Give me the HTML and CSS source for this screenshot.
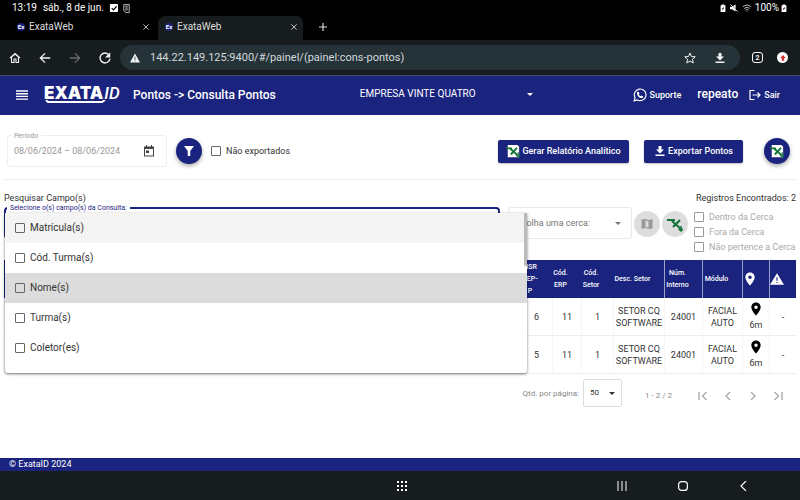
FILE: index.html
```
<!DOCTYPE html>
<html lang="pt-BR">
<head>
<meta charset="utf-8">
<title>ExataWeb</title>
<link rel="stylesheet" href="styles.css">
</head>
<body>
<svg class="defs" aria-hidden="true">
  <symbol id="sheet" viewBox="0 0 16 16">
    <path d="M2 1h11l2 2v12H2z" fill="#fff"/>
    <path d="M0 5h7M5 5.500l8 7M12.500 4.500l-7 7.500" stroke="#16753c" stroke-width="2.200" fill="none"/>
    <path d="M14 9.500v5.500M11.500 12.500l2.500 2.500 2-2" stroke="#16753c" stroke-width="1.400" fill="none"/>
  </symbol>
  <symbol id="pin" viewBox="0 0 24 24"><path fill-rule="evenodd" d="M12 1C7.600 1 4 4.600 4 9c0 6 8 14 8 14s8-8 8-14c0-4.400-3.600-8-8-8zm0 11a3 3 0 1 1 0-6 3 3 0 0 1 0 6z"/></symbol>
  <symbol id="cross" viewBox="0 0 24 24"><path d="M4 4l16 16M20 4L4 20" stroke="currentColor" stroke-width="2.500"/></symbol>
  <symbol id="download" viewBox="0 0 24 24"><path d="M9 2h6v7h5l-8 8-8-8h5zM3 19h18v3H3z"/></symbol>
  <symbol id="battery" viewBox="0 0 8 10"><path fill-rule="evenodd" d="M1 1.500h1.500V.5h3v1H7V10H1zM4 3.500v2H2.500L4 8V6h1.500z"/></symbol>
</svg>

<div class="status">
  <span class="clock">13:19</span>
  <span class="date">sáb., 8 de jun.</span>
  <svg class="i9" viewBox="0 0 10 10"><rect x="1" y="0" width="9" height="9" rx="1"/><path d="M3 4.500l2 2 3.500-4" stroke="#000" stroke-width="1.300" fill="none"/></svg>
  <svg class="i9 note" viewBox="0 0 10 10"><path d="M2 .5h6v9H4.500L2 7.500zM3.500 2.500h3M3.500 4.500h3M3.500 6.500h3" fill="none" stroke="#ccc"/></svg>
  <span class="grow"></span>
  <svg class="i8" viewBox="0 0 8 10"><use href="#battery"/></svg>
  <svg class="i8 mute" viewBox="0 0 10 10"><path d="M0 3.500h2.500L7 .5v9l-4.500-3H0z"/><path d="M1 .5l8.500 9" stroke="#000"/><path d="M.5 .5l9 9" stroke="#fff"/></svg>
  <svg class="i10" viewBox="0 0 12 10"><path d="M1 3.500q5-4 10 0M2.700 5.500q3.300-2.600 6.600 0M4.300 7.400q1.700-1.300 3.400 0M5.500 9h1" fill="none" stroke="#ddd"/></svg>
  <span class="percent">100%</span>
  <svg class="i8" viewBox="0 0 8 10"><use href="#battery"/></svg>
</div>

<nav class="tabs" aria-label="Abas">
  <div class="tab"><span class="fav">Ex</span><span class="tab-name">ExataWeb</span><button class="bare" aria-label="Fechar aba"><svg class="i8"><use href="#cross"/></svg></button></div>
  <div class="tab current"><span class="fav">Ex</span><span class="tab-name">ExataWeb</span><button class="bare" aria-label="Fechar aba"><svg class="i8"><use href="#cross"/></svg></button></div>
  <button class="bare new-tab" aria-label="Nova aba"><svg class="i8" viewBox="0 0 10 10"><path d="M5 0v10M0 5h10" stroke="currentColor" stroke-width="1.500"/></svg></button>
</nav>

<div class="toolbar">
  <button class="bare" aria-label="Início"><svg class="i12" viewBox="0 0 24 24"><path d="M5 21V10l7-6 7 6v11h-5v-7h-4v7zM2 12l10-9 10 9" fill="none" stroke="currentColor" stroke-width="2.200"/></svg></button>
  <button class="bare" aria-label="Voltar"><svg class="i14" viewBox="0 0 24 24"><path d="M21 12H4M12 4l-8 8 8 8" fill="none" stroke="currentColor" stroke-width="2.200"/></svg></button>
  <button class="bare dim" aria-label="Avançar"><svg class="i14" viewBox="0 0 24 24"><path d="M3 12h17M12 4l8 8-8 8" fill="none" stroke="currentColor" stroke-width="2.200"/></svg></button>
  <button class="bare" aria-label="Recarregar"><svg class="i14" viewBox="0 0 24 24"><path d="M19 7a8.500 8.500 0 1 0 1.500 6" fill="none" stroke="currentColor" stroke-width="2.400"/><path d="M21 2v9h-9z"/></svg></button>
  <div class="address">
    <svg class="i10" viewBox="0 0 24 22"><path fill-rule="evenodd" d="M12 0l12 22H0zM11 8h2v7h-2zM11 17h2v2h-2z"/></svg>
    <input class="url" aria-label="Endereço" value="144.22.149.125:9400/#/painel/(painel:cons-pontos)">
    <button class="bare" aria-label="Favoritar"><svg class="i12" viewBox="0 0 24 24"><path d="M12 2l3 7 7.500.6-5.700 5 1.700 7.400L12 18l-6.500 4 1.700-7.400-5.700-5L9 9z" fill="none" stroke="currentColor" stroke-width="2"/></svg></button>
    <button class="bare" aria-label="Baixar"><svg class="i12"><use href="#download"/></svg></button>
  </div>
  <button class="count" aria-label="Abas abertas">2</button>
  <button class="update" aria-label="Atualizar"><svg viewBox="0 0 10 10"><path d="M5 0l4.500 5H7v4.500H3V5H.5z"/></svg></button>
</div>

<header class="header">
  <button class="bare" aria-label="Menu"><svg class="i12" viewBox="0 0 12 12"><path d="M0 2h12M0 4.700h12M0 7.400h12M0 10.100h12" stroke="currentColor" stroke-width="1.400"/></svg></button>
  <div class="logo"><div class="logo-text"><span class="logo-name">EXATA</span><span class="logo-id">ID</span></div>
    <svg class="logo-line" viewBox="0 0 62 4"><path d="M2 0l2 2h54l3-2" fill="none" stroke="#fff" stroke-width="2"/></svg></div>
  <h1>Pontos -&gt; Consulta Pontos</h1>
  <div class="pick company"><select aria-label="Empresa"><option>EMPRESA VINTE QUATRO</option></select></div>
  <a class="link support" href="#"><svg class="i14" viewBox="0 0 24 24"><path d="M2 22l1.500-5.500a10 10 0 1 1 4 4z" fill="none" stroke="currentColor" stroke-width="2"/><path d="M8 6.500l2 .3 1 3-1.200 1.200q1 2.200 3.400 3.300l1.400-1.300 2.900 1.400q0 3-2.800 3.100Q8 16.500 6.700 9.300 6.800 7.500 8 6.500z"/></svg>Suporte</a>
  <span class="user">repeato</span>
  <a class="link" href="#"><svg class="i12" viewBox="0 0 24 22"><path d="M11 2H2v18h9M7 11h15M17 6l5 5-5 5" fill="none" stroke="currentColor" stroke-width="2.400"/></svg>Sair</a>
</header>

<main>
  <section class="filters">
    <div class="period">
      <label for="period">Período</label>
      <input id="period" value="08/06/2024 – 08/06/2024" disabled>
      <button class="bare" aria-label="Calendário"><svg class="i12" viewBox="0 0 24 24"><path fill-rule="evenodd" d="M2 3h4V0h2v3h8V0h2v3h4v20H2zM4 8v13h16V8zM6 11h6v5H6z"/></svg></button>
    </div>
    <button class="round" aria-label="Filtrar"><svg class="i12" viewBox="0 0 24 24"><path d="M2 2h20l-7.500 10v10h-5V12z"/></svg></button>
    <label class="check"><input type="checkbox">Não exportados</label>
    <span class="grow"></span>
    <button class="solid"><svg class="i14"><use href="#sheet"/></svg>Gerar Relatório Analítico</button>
    <button class="solid export"><svg class="i12"><use href="#download"/></svg>Exportar Pontos</button>
    <button class="round" aria-label="Exportar planilha"><svg class="i14"><use href="#sheet"/></svg></button>
  </section>

  <div class="captions"><span>Pesquisar Campo(s)</span><span>Registros Encontrados: 2</span></div>

  <section class="search">
    <div class="field">
      <span class="field-name" id="fields">Selecione o(s) campo(s) da Consulta:</span>
      <div class="menu" role="group" aria-labelledby="fields">
        <label class="hint"><input type="checkbox">Matrícula(s)</label>
        <label><input type="checkbox">Cód. Turma(s)</label>
        <label class="hover"><input type="checkbox">Nome(s)</label>
        <label><input type="checkbox">Turma(s)</label>
        <label><input type="checkbox">Coletor(es)</label>
        <span class="thumb"></span>
      </div>
    </div>
    <div class="pick fence"><select aria-label="Cerca"><option>Escolha uma cerca:</option></select></div>
    <div class="tools">
      <button class="round off" aria-label="Mapa"><svg class="i12" viewBox="0 0 24 24"><path fill-rule="evenodd" d="M1 3l7-1 8 2 7-2v19l-7 1-8-2-7 2zM9 5v13l6 1.500v-13z"/></svg></button>
      <button class="round off" aria-label="Exportar cercas"><svg class="i16" viewBox="0 0 16 16"><path d="M0 4h8M5 5l9 8M13 4L6 11" stroke="#16753c" stroke-width="2.200" fill="none"/><path d="M14 10v5M11.500 13l2.500 2 2-2" stroke="#16753c" stroke-width="1.500" fill="none"/></svg></button>
    </div>
    <div class="fences">
      <label class="check"><input type="checkbox" disabled>Dentro da Cerca</label>
      <label class="check"><input type="checkbox" disabled>Fora da Cerca</label>
      <label class="check"><input type="checkbox" disabled>Não pertence a Cerca</label>
    </div>
  </section>

  <table>
    <colgroup><col><col class="c32"><col class="c29"><col class="c32"><col class="c51"><col class="c38"><col class="c40"><col class="c27"><col class="c27"></colgroup>
    <thead>
      <tr><th></th><th>NSR<br>REP-<br>P</th><th>Cód. ERP</th><th>Cód. Setor</th><th>Desc. Setor</th><th class="rule">Núm. Interno</th><th class="rule">Módulo</th><th class="rule"><svg class="i14"><use href="#pin"/></svg></th><th class="rule"><svg class="i14" viewBox="0 0 24 24"><path fill-rule="evenodd" d="M12 2l12 20H0zM11 9v6h2V9zM11 17v2h2v-2z"/></svg></th></tr>
    </thead>
    <tbody>
      <tr><td></td><td>6</td><td>11</td><td>1</td><td>SETOR CQ SOFTWARE</td><td>24001</td><td>FACIAL AUTO</td><td class="place"><svg class="i14"><use href="#pin"/></svg>6m</td><td>-</td></tr>
      <tr><td></td><td>5</td><td>11</td><td>1</td><td>SETOR CQ SOFTWARE</td><td>24001</td><td>FACIAL AUTO</td><td class="place"><svg class="i14"><use href="#pin"/></svg>6m</td><td>-</td></tr>
    </tbody>
  </table>

  <div class="pager">
    <label for="size">Qtd. por página:</label>
    <div class="pick size"><select id="size"><option>50</option></select></div>
    <span class="range">1 - 2 / 2</span>
    <button class="bare" aria-label="Primeira página"><svg class="i10" viewBox="0 0 10 10"><path d="M1 1v8M8.500 1l-4 4 4 4"/></svg></button>
    <button class="bare" aria-label="Página anterior"><svg class="i10" viewBox="0 0 10 10"><path d="M7 1L3 5l4 4"/></svg></button>
    <button class="bare" aria-label="Próxima página"><svg class="i10" viewBox="0 0 10 10"><path d="M3 1l4 4-4 4"/></svg></button>
    <button class="bare" aria-label="Última página"><svg class="i10" viewBox="0 0 10 10"><path d="M9 1v8M1.500 1l4 4-4 4"/></svg></button>
  </div>
</main>

<footer>© ExataID 2024</footer>

<nav class="system" aria-label="Sistema">
  <button class="bare apps" aria-label="Aplicativos"><svg class="i10" viewBox="0 0 10 10"><path d="M0 1h10M0 5h10M0 9h10" stroke="currentColor" stroke-width="2" stroke-dasharray="2 2"/></svg></button>
  <span class="keys">
    <button class="bare" aria-label="Recentes"><svg class="i10" viewBox="0 0 10 10"><path d="M1 0v10M5 0v10M9 0v10" stroke="currentColor"/></svg></button>
    <button class="bare" aria-label="Tela inicial"><svg class="i10" viewBox="0 0 10 10"><rect x=".6" y=".6" width="8.800" height="8.800" rx="3" fill="none" stroke="currentColor" stroke-width="1.200"/></svg></button>
    <button class="bare" aria-label="Voltar"><svg class="i10" viewBox="0 0 10 10"><path d="M7 0L2 5l5 5" fill="none" stroke="currentColor" stroke-width="1.200"/></svg></button>
  </span>
</nav>
</body>
</html>
```
FILE: styles.css
```
* { box-sizing: border-box; }
body {
  margin: 0;
  min-height: 100vh;
  display: flex;
  flex-direction: column;
  background: #fff;
  color: #333;
  font: 9px/12px Roboto, sans-serif;
}
button, input, select { font: inherit; color: inherit; }
svg { display: block; flex: none; fill: currentColor; }
.defs { position: absolute; width: 0; height: 0; }
.i8 { width: 8px; height: 8px; }
.i9 { width: 9px; height: 9px; }
.i10 { width: 10px; height: 10px; }
.i12 { width: 12px; height: 12px; }
.i14 { width: 14px; height: 14px; }
.i16 { width: 16px; height: 16px; }
.grow { flex: 1; }
.bare {
  display: grid;
  place-items: center;
  flex: none;
  padding: 0;
  border: 0;
  background: none;
}

.status {
  display: flex;
  align-items: center;
  height: 16px;
  padding: 0 12px;
  background: #000;
  color: #fff;
  font-size: 10px;
}
.date { margin: 0 5px 0 6px; }
.note { margin-left: 4px; }
.mute { margin: 0 4px 0 3px; }
.percent { margin: 0 1px 0 3px; }

.tabs { display: flex; height: 24px; background: #000; color: #ddd; font-size: 10px; }
.tab { display: flex; align-items: center; width: 148px; margin-left: 10px; padding: 0 8px 2px 7px; }
.tab.current { margin: 0; width: 145px; padding: 0 5px 2px 7px; border-radius: 7px 7px 0 0; background: #171c1f; }
.tab-name { flex: 1; margin-left: 4px; }
.fav {
  width: 8px;
  height: 8px;
  border-radius: 50%;
  background: #1a237e;
  color: #fff;
  font-size: 6px;
  font-weight: 700;
  line-height: 8px;
  text-align: center;
}
.new-tab { margin: 0 16px 2px; }

.toolbar {
  display: flex;
  align-items: center;
  height: 36px;
  padding: 0 12px 0 8px;
  border-bottom: 1px solid #454b60;
  background: #171c1f;
  color: #f0f3f4;
}
.toolbar > .bare { width: 14px; margin-right: 16px; }
.toolbar > .dim { color: #666b6d; }
.toolbar > .bare:nth-child(4) { margin-right: 8px; }
.address {
  display: flex;
  flex: 1;
  align-items: center;
  gap: 18px;
  height: 25px;
  padding: 0 14px 0 10px;
  border-radius: 13px;
  background: #253238;
}
.url {
  flex: 1;
  min-width: 0;
  margin-left: -8px;
  padding: 0;
  border: 0;
  background: none;
  color: #d3dadd;
  font-size: 11px;
}
.count {
  width: 11px;
  height: 11px;
  margin: 0 14px 0 12px;
  padding: 0;
  border: 1px solid #fff;
  border-radius: 3px;
  background: none;
  font-size: 7px;
  font-weight: 700;
  line-height: 8px;
}
.update {
  display: grid;
  place-items: center;
  width: 11px;
  height: 11px;
  padding: 0;
  border: 0;
  border-radius: 50%;
  background: #fff;
  color: #d32f2f;
}
.update svg { width: 6px; height: 6px; }

.header {
  display: flex;
  align-items: center;
  height: 39px;
  padding: 0 20px 1px 16px;
  background: #1a237e;
  color: #fff;
}
.logo { width: 79px; margin: 0 10px 0 16px; }
.logo-text { display: flex; align-items: baseline; gap: 1px; }
.logo-name { font: 900 17px/14px Inter, sans-serif; }
.logo-id { font: italic 500 17px/14px Roboto, sans-serif; }
.logo-line { width: 62px; height: 4px; }
h1 { margin: 0; font-size: 12px; font-weight: 500; line-height: 16px; white-space: nowrap; }

.pick { display: flex; position: relative; align-items: center; }
.pick select {
  width: 100%;
  height: 100%;
  padding: 0;
  border: 0;
  appearance: none;
  background: none;
}
.pick::after {
  content: "";
  position: absolute;
  right: 0;
  border: 3px solid transparent;
  border-top-color: currentColor;
  border-bottom: 0;
}
.company { width: 173px; margin: 0 auto 2px 84px; font-size: 10px; }
.link { display: flex; align-items: center; gap: 3px; color: inherit; font-weight: 500; text-decoration: none; }
.user { margin: 0 11px 2px 16px; font-size: 12px; font-weight: 500; }

main { flex: 1; padding: 0 4px; }
.filters {
  display: flex;
  align-items: center;
  height: 65px;
  padding: 8px 6px 0 3px;
  border-bottom: 1px solid #eee;
}
.period {
  display: flex;
  position: relative;
  align-items: center;
  width: 160px;
  height: 32px;
  margin-right: 9px;
  padding: 0 11px 0 6px;
  border: 1px solid #eee;
  border-radius: 3px;
  color: #999;
}
.period label {
  position: absolute;
  top: -6px;
  left: 3px;
  padding: 0 3px;
  background: #fff;
  font-size: 7px;
}
.period input { flex: 1; min-width: 0; padding: 0; border: 0; background: none; }
.period .bare { color: #444; }
.round {
  display: grid;
  place-items: center;
  flex: none;
  width: 26px;
  height: 26px;
  padding: 0;
  border: 0;
  border-radius: 50%;
  background: #1a237e;
  color: #fff;
  box-shadow: 0 2px 4px #0005;
}
.check { display: flex; align-items: center; gap: 5px; }
input[type="checkbox"] {
  flex: none;
  width: 10px;
  height: 10px;
  margin: 0;
  border: 1px solid #666;
  border-radius: 1px;
  appearance: none;
}
.filters .check { margin-left: 9px; }
.solid {
  display: flex;
  align-items: center;
  justify-content: center;
  gap: 2px;
  width: 131px;
  height: 23px;
  padding: 0;
  border: 0;
  border-radius: 2px;
  background: #1a237e;
  color: #fff;
  font-weight: 500;
  white-space: nowrap;
  box-shadow: 0 1px 2px #0004;
}
.export { width: 99px; margin: 0 21px 0 15px; }

.captions { display: flex; justify-content: space-between; padding-top: 12px; }
.search { display: flex; align-items: flex-start; height: 56px; padding-top: 3px; }
.field {
  position: relative;
  flex: 1;
  height: 32px;
  border: 2px solid #1a237e;
  border-radius: 4px;
}
.field-name {
  position: absolute;
  top: -6px;
  left: 1px;
  padding: 0 3px;
  background: #fff;
  color: #1a237e;
  font-size: 7px;
  line-height: 10px;
}
.menu {
  position: absolute;
  z-index: 1;
  top: 4px;
  left: -1px;
  right: -29px;
  padding-bottom: 10px;
  border-radius: 0 0 3px 3px;
  background: #fff;
  font-size: 10px;
  box-shadow: 0 1px 3px #0008;
}
.menu label { display: flex; align-items: center; gap: 5px; height: 30px; padding-left: 10px; }
.menu .hint { background: #f4f4f4; }
.menu .hover { background: #dcdcdc; }
.thumb { position: absolute; top: 0; right: 0; width: 3px; height: 53px; background: #bbb; }
.fence {
  width: 124px;
  height: 32px;
  margin-left: 8px;
  padding: 0 10px 0 3px;
  border: 1px solid #e8e8e8;
  border-radius: 3px;
  color: #777;
}
.fence::after { right: 10px; }
.tools { display: flex; gap: 2px; margin: 4px 6px 0 2px; }
.off { background: #ddd; color: #999; box-shadow: none; }
.fences { width: 102px; padding-top: 2px; color: #aaa; white-space: nowrap; }
.fences .check { height: 15px; }
.fences input { border-color: #999; }

table { width: 100%; border-collapse: separate; border-spacing: 0; table-layout: fixed; }
.c27 { width: 27px; }
.c29 { width: 29px; }
.c32 { width: 32px; }
.c38 { width: 38px; }
.c40 { width: 40px; }
.c51 { width: 51px; }
th, td { height: 38px; padding: 0; text-align: center; }
th { padding-right: 12px; background: #1a237e; color: #fff; font-size: 7px; font-weight: 500; line-height: 12px; }
.rule { border-left: 1px solid #9da1c8; }
th svg { margin: 0 auto; }
td { border-bottom: 1px solid #eee; border-left: 1px solid #f6f6f6; }
.place svg { margin: 0 auto 3px; color: #000; }

.pager {
  display: flex;
  align-items: center;
  justify-content: flex-end;
  gap: 15px;
  padding: 5px 13px 0 0;
  color: #888;
  font-size: 8px;
}
.pager .bare, .range { padding-top: 6px; }
.pager label { padding-top: 2px; }
.pager path { fill: none; stroke: #aaa; stroke-width: 1.4; }
.size {
  width: 39px;
  height: 28px;
  margin-left: -11px;
  padding: 0 6px;
  border: 1px solid #ddd;
  border-radius: 2px;
  color: #333;
}
.size::after { right: 6px; }
.range { margin: 0 11px 0 8px; }

footer {
  height: 13px;
  padding-left: 9px;
  background: #1a237e;
  color: #fff;
}
.system {
  display: flex;
  align-items: center;
  justify-content: space-between;
  height: 29px;
  padding: 0 51px 0 397px;
  background: #171c1f;
  color: #fff;
}
.keys { display: flex; gap: 51px; }
```
